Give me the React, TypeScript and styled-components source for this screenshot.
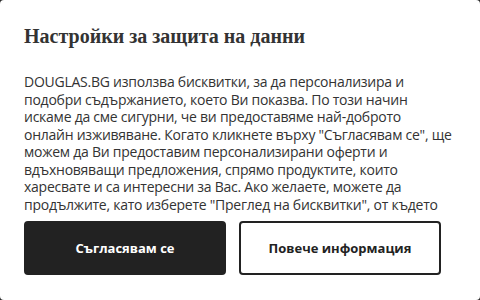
import React from "react";
import styled, { createGlobalStyle } from "styled-components";

const Global = createGlobalStyle`
  html, body { margin: 0; padding: 0; background: #2a2a2a; }
  * { box-sizing: border-box; }
`;

const Dialog = styled.div`
  width: 480px;
  height: 300px;
  background: #ffffff;
  border-radius: 4px;
  padding: 24px 24px 25px;
  display: flex;
  flex-direction: column;
  color: #333333;
`;

const Title = styled.h2`
  margin: 0;
  font-family: "Liberation Serif", "Times New Roman", serif;
  font-weight: 700;
  font-size: 20px;
  line-height: 24px;
  color: #333333;
`;

const Body = styled.div`
  margin-top: 25px;
  margin-right: -12px;
  height: 140px;
  overflow: hidden;
  font-family: "Open Sans", "Noto Sans", sans-serif;
  font-size: 14px;
  line-height: 17.5px;
  color: #333333;
`;

const Para = styled.p`
  margin: 0;
  white-space: nowrap;
  letter-spacing: -0.25px;
`;

const Actions = styled.div`
  margin-top: 8px;
  display: flex;
  gap: 13px;
`;

const Button = styled.button<{ $primary?: boolean }>`
  width: 202px;
  height: 54px;
  border-radius: 4px;
  border: 2px solid #222222;
  background: ${(p) => (p.$primary ? "#222222" : "#ffffff")};
  color: ${(p) => (p.$primary ? "#ffffff" : "#222222")};
  font-family: "Open Sans", "Noto Sans", sans-serif;
  font-weight: 700;
  font-size: 13px;
  cursor: pointer;
`;

const lines = [
  "DOUGLAS.BG използва бисквитки, за да персонализира и",
  "подобри съдържанието, което Ви показва. По този начин",
  "искаме да сме сигурни, че ви предоставяме най-доброто",
  'онлайн изживяване. Когато кликнете върху "Съгласявам се", ще',
  "можем да Ви предоставим персонализирани оферти и",
  "вдъхновяващи предложения, спрямо продуктите, които",
  "харесвате и са интересни за Вас. Ако желаете, можете да",
  'продължите, като изберете "Преглед на бисквитки", от където',
  "можете да изберете кои бисквитки да бъдат разрешени.",
];

export default function App() {
  return (
    <>
      <Global />
      <Dialog>
        <Title>Настройки за защита на данни</Title>
        <Body>
          <Para>
            {lines.map((l, i) => (
              <React.Fragment key={i}>
                {l}
                {i < lines.length - 1 && <br />}
              </React.Fragment>
            ))}
          </Para>
        </Body>
        <Actions>
          <Button $primary>Съгласявам се</Button>
          <Button>Повече информация</Button>
        </Actions>
      </Dialog>
    </>
  );
}
